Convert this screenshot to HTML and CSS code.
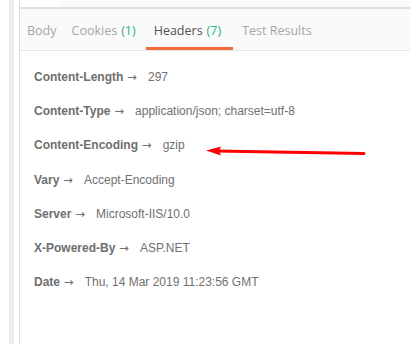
FILE: index.html
```html
<!DOCTYPE html>
<html>
<head>
<meta charset="utf-8">
<link rel="stylesheet" href="styles.css">
</head>
<body>
<div class="app">
  <div class="gutter"></div>
  <div class="strip"></div>
  <div class="gap"></div>
  <div class="panel">
    <div class="top"><div class="top-left"></div><div class="top-right"></div></div>
    <div class="tabs">
      <div class="tab first">Body</div>
      <div class="tab">Cookies <span class="count">(1)</span></div>
      <div class="tab active">Headers <span class="count">(7)</span></div>
      <div class="tab">Test Results</div>
    </div>
    <div class="headers">
      <div class="row"><span class="name">Content-Length</span><span class="arrow">→</span><span class="value">297</span></div>
      <div class="row"><span class="name">Content-Type</span><span class="arrow">→</span><span class="value">application/json; charset=utf-8</span></div>
      <div class="row"><span class="name">Content-Encoding</span><span class="arrow">→</span><span class="value">gzip</span></div>
      <div class="row"><span class="name">Vary</span><span class="arrow">→</span><span class="value">Accept-Encoding</span></div>
      <div class="row"><span class="name">Server</span><span class="arrow">→</span><span class="value">Microsoft-IIS/10.0</span></div>
      <div class="row"><span class="name">X-Powered-By</span><span class="arrow">→</span><span class="value">ASP.NET</span></div>
      <div class="row"><span class="name">Date</span><span class="arrow">→</span><span class="value">Thu, 14 Mar 2019 11:23:56 GMT</span></div>
    </div>
  </div>
</div>
<svg class="annot" width="410" height="344" viewBox="0 0 410 344">
  <path d="M364 153.5 L216 151" stroke="#f00" stroke-width="3" stroke-linecap="round" fill="none"/>
  <path d="M206 150.5 L221 146.5 L219 151 L221 155.5 Z" fill="#f00"/>
</svg>
</body>
</html>
```
FILE: styles.css
```css
html, body {
  margin: 0;
  padding: 0;
  background: #fff;
}
.app {
  display: flex;
  height: 344px;
  width: 410px;
  overflow: hidden;
}
.gutter {
  width: 9px;
  background: #fff;
}
.strip {
  width: 5px;
  background: #ececec;
}
.gap {
  width: 5px;
  background: #fff;
}
.panel {
  flex: 1;
  border-left: 1px solid #dcdcdc;
  display: flex;
  flex-direction: column;
}
.top {
  height: 7px;
  display: flex;
  border-bottom: 2px solid #dedede;
}
.top-left {
  width: 40px;
  background: #fff;
}
.top-right {
  flex: 1;
  background: #fafafa;
}
.tabs {
  height: 41px;
  background: #fafafa;
  border-bottom: 1px solid #e6e6e6;
  display: flex;
  padding-left: 7px;
  font-family: "Open Sans", sans-serif;
  font-size: 12.5px;
  color: #a6a6a6;
}
.tab {
  padding: 0 9px 0 8px;
  margin-right: 1px;
  display: flex;
  align-items: center;
  box-sizing: border-box;
  height: 41px;
  padding-top: 4px;
  border-bottom: 3px solid transparent;
}
.tab.first {
  padding-left: 0;
  padding-right: 6px;
}
.tab.active {
  color: #505050;
  border-bottom-color: #f26b3a;
  padding-right: 12px;
}
.count {
  color: #2bb37f;
  margin-left: 4px;
}
.headers {
  padding: 19px 0 0 14px;
  font-family: "Liberation Sans", Arial, sans-serif;
  font-size: 12px;
  color: #707070;
}
.row {
  height: 34.2px;
  line-height: 14px;
}
.name {
  font-weight: bold;
  color: #6e6e6e;
}
.arrow {
  font-family: "DejaVu Sans", sans-serif;
  font-size: 11.5px;
  margin: 0 11px 0 4px;
  color: #6e6e6e;
}
.value {
  color: #707070;
}
.annot {
  position: absolute;
  left: 0;
  top: 0;
  pointer-events: none;
}
```
